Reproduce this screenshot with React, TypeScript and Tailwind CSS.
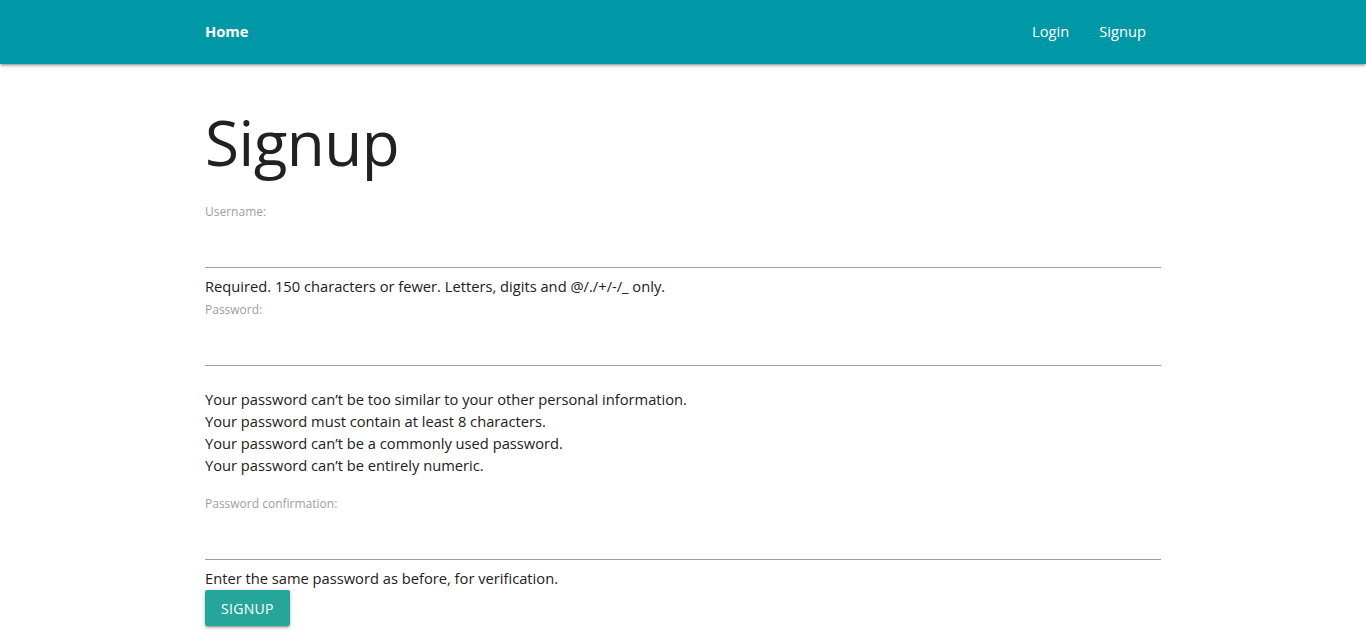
import React from "react";

const font = { fontFamily: '"Open Sans", "Noto Sans", sans-serif' };

function Field({ label, type = "text" }: { label: string; type?: string }) {
  return (
    <div>
      <label className="block text-[12px] leading-[18px] text-[#9e9e9e]">{label}</label>
      <input
        type={type}
        className="mt-[2px] block h-[45px] w-full border-0 border-b border-[#9e9e9e] bg-transparent text-[15px] outline-none"
      />
    </div>
  );
}

export default function App() {
  return (
    <div className="min-h-screen bg-white text-[14.7px] text-[#212121]" style={font}>
      <nav className="h-16 bg-[#0097a7] text-white shadow-[0_2px_2px_0_rgba(0,0,0,0.14),0_3px_1px_-2px_rgba(0,0,0,0.12),0_1px_5px_0_rgba(0,0,0,0.2)]">
        <div className="mx-auto flex h-full w-[956px] items-center justify-between pb-[2px]">
          <a href="#" className="text-[14.7px] font-bold">Home</a>
          <ul className="flex items-center">
            <li><a href="#" className="px-[15px] text-[14.7px]">Login</a></li>
            <li><a href="#" className="px-[15px] text-[14.7px]">Signup</a></li>
          </ul>
        </div>
      </nav>

      <main className="mx-auto w-[956px]">
        <h1 className="mt-[44px] mb-[26px] text-[62px] font-normal leading-[69px] tracking-[-0.5px]">Signup</h1>

        <form onSubmit={(e) => e.preventDefault()}>
          <div className="mt-[12px]">
            <Field label="Username:" />
            <div className="mt-[7px] leading-[22px]">Required. 150 characters or fewer. Letters, digits and @/./+/-/_ only.</div>
          </div>

          <div className="mt-[4px]">
            <Field label="Password:" type="password" />
            <ul className="mt-[22px] leading-[22px]">
              <li>Your password can’t be too similar to your other personal information.</li>
              <li>Your password must contain at least 8 characters.</li>
              <li>Your password can’t be a commonly used password.</li>
              <li>Your password can’t be entirely numeric.</li>
            </ul>
          </div>

          <div className="mt-[19px]">
            <Field label="Password confirmation:" type="password" />
            <div className="mt-[7px] leading-[22px]">Enter the same password as before, for verification.</div>
          </div>

          <button
            type="submit"
            className="mt-px h-9 rounded-[2px] bg-[#26a69a] px-4 text-[14px] tracking-[0.3px] text-white uppercase shadow-[0_2px_2px_0_rgba(0,0,0,0.14),0_3px_1px_-2px_rgba(0,0,0,0.12),0_1px_5px_0_rgba(0,0,0,0.2)]"
          >
            Signup
          </button>
        </form>
      </main>
    </div>
  );
}
